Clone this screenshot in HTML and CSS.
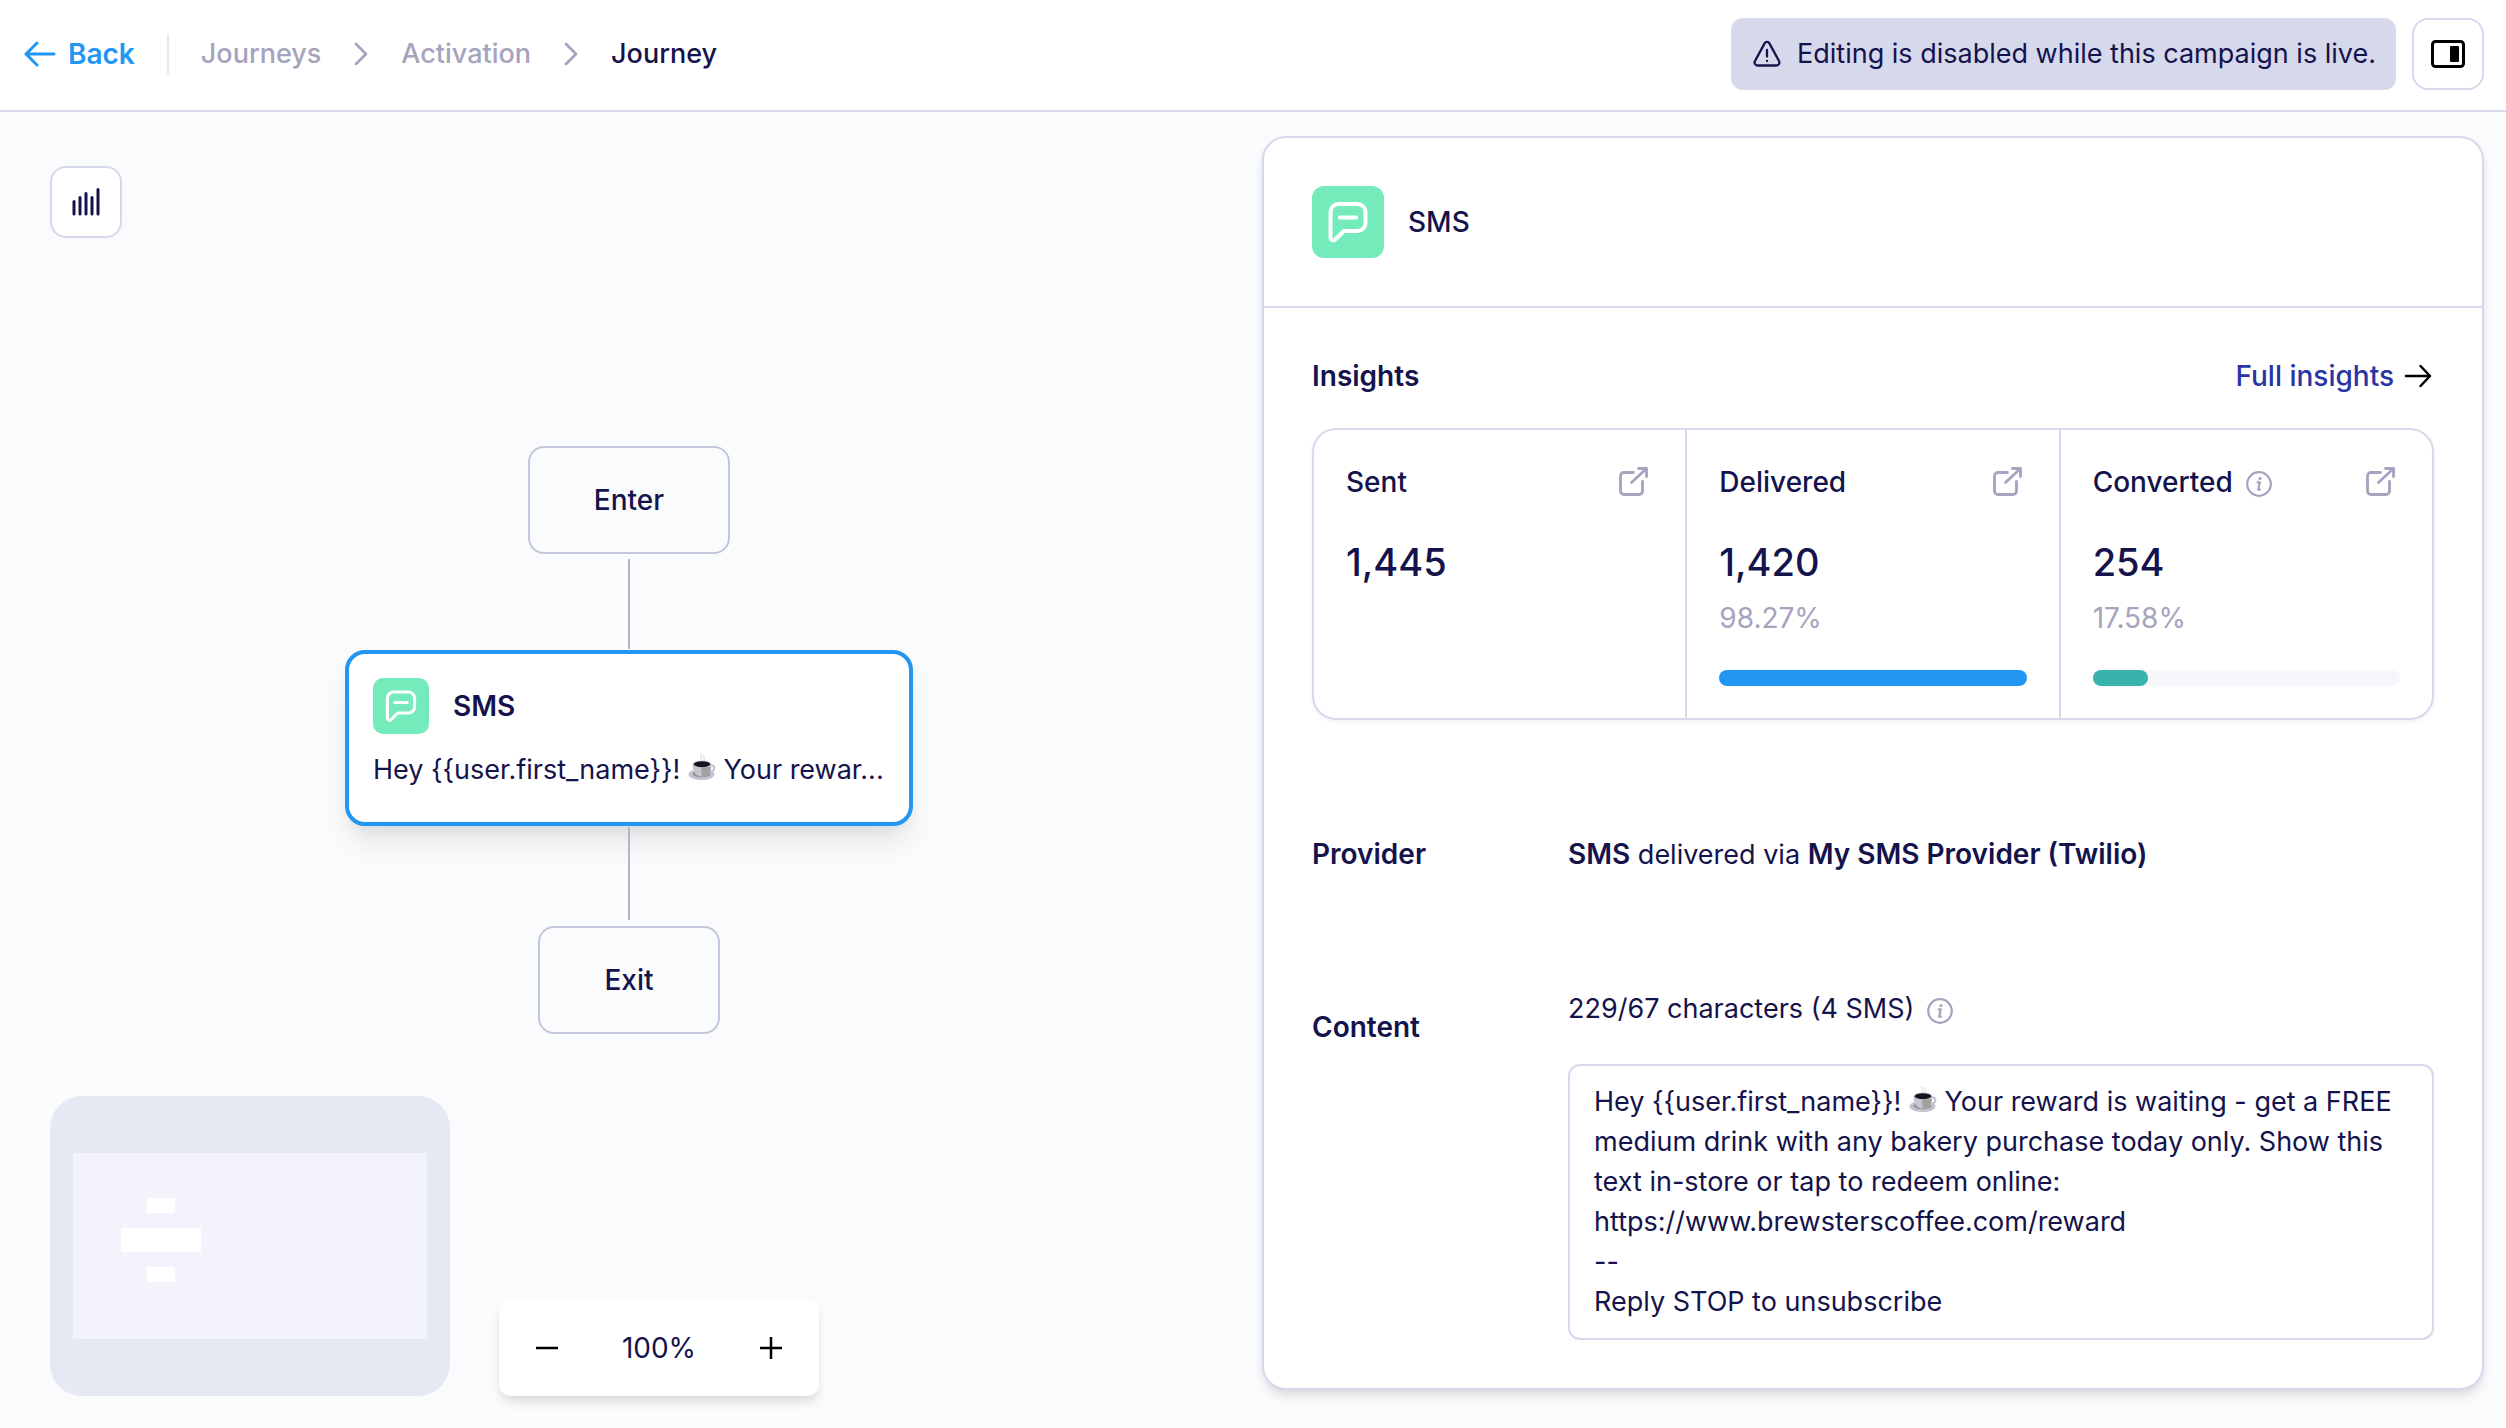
FILE: index.html
```html
<!DOCTYPE html>
<html lang="en">
<head>
    <meta charset="UTF-8">
    <meta name="viewport" content="width=device-width, initial-scale=1.0">
    <title>Journey</title>
    <link rel="stylesheet" href="styles.css">
</head>
<body>
    <!-- shared icons -->
    <svg class="sprite" aria-hidden="true">
        <symbol id="icon-sms" viewBox="0 0 72 72">
            <path d="M18.500 51V26a8 8 0 0 1 8-8h19a8 8 0 0 1 8 8v11a8 8 0 0 1-8 8H32l-8.500 8.300a2.900 2.900 0 0 1-5-2.300z" fill="none" stroke="#fff" stroke-width="4" stroke-linejoin="round"/>
            <path d="M28 31.500h16" fill="none" stroke="#fff" stroke-width="4" stroke-linecap="round"/>
        </symbol>
        <symbol id="icon-external" viewBox="0 0 40 40">
            <path d="M20.500 10.500H11a3.500 3.500 0 0 0-3.500 3.500v15a3.500 3.500 0 0 0 3.500 3.500h15a3.500 3.500 0 0 0 3.500-3.500V19.500M18.500 20.500 33.500 6.500M25.500 6.500h8v8" fill="none" stroke="#a5a3bd" stroke-width="2.800" stroke-linecap="round" stroke-linejoin="round"/>
        </symbol>
        <symbol id="icon-info" viewBox="0 0 28 28">
            <circle cx="14" cy="14" r="11.800" fill="none" stroke="#a5a3bd" stroke-width="2.200"/>
            <path d="M11.800 12.300h3l-1.600 7.400h2.600" fill="none" stroke="#a5a3bd" stroke-width="2.200" stroke-linejoin="round"/>
            <circle cx="15" cy="8.600" r="1.600" fill="#a5a3bd"/>
        </symbol>
        <symbol id="icon-chevron" viewBox="0 0 16 24">
            <path d="M3 2l10 10L3 22" fill="none" stroke="#a5a3bd" stroke-width="2.800" stroke-linecap="round" stroke-linejoin="round"/>
        </symbol>
        <symbol id="icon-coffee" viewBox="0 0 28 28">
            <path d="M13 1c-2 2 2 3 0 6M16 2c-1 2 1 3 0 5" fill="none" stroke="#dddde2" stroke-width="1.200"/>
            <ellipse cx="13.500" cy="21.500" rx="13" ry="5.500" fill="#c3c2d0"/>
            <ellipse cx="13.500" cy="20.800" rx="9" ry="3.500" fill="#94908f"/>
            <path d="M22 12.500c6-1.500 6 6.500-1 6.500" fill="none" stroke="#c0c0d2" stroke-width="2"/>
            <path d="M4.500 11c0 7 3 12.500 9.500 12.500S23.500 18 23.500 11z" fill="#c6c6d2"/>
            <path d="M13 14h10c-1 6-4 9.500-9 9.500z" fill="#a39f9d"/>
            <ellipse cx="14" cy="11" rx="9.500" ry="3.700" fill="#d7d7e2"/>
            <ellipse cx="14" cy="11.200" rx="8.200" ry="3" fill="#16141f"/>
        </symbol>
    </svg>

    <header class="topbar">
        <a class="back" href="#">
            <svg width="32" height="28" viewBox="0 0 32 28" fill="none" stroke="#2196f3" stroke-width="3" stroke-linecap="round" stroke-linejoin="round"><path d="M30 14H2M13 3 2 14l11 11"/></svg>
            Back
        </a>
        <nav class="breadcrumbs">
            <a href="#">Journeys</a>
            <svg class="chevron"><use href="#icon-chevron"/></svg>
            <a href="#">Activation</a>
            <svg class="chevron"><use href="#icon-chevron"/></svg>
            <span class="current">Journey</span>
        </nav>
        <div class="notice">
            <svg width="28" height="28" viewBox="0 0 28 28" fill="none" stroke="#14134b" stroke-width="2.300" stroke-linecap="round" stroke-linejoin="round"><path d="M11.600 3.400 2 21a3 3 0 0 0 2.600 4.500h18.800A3 3 0 0 0 26 21L16.400 3.400a2.700 2.700 0 0 0-4.800 0zM14 10v6.500M14 20.800v.200"/></svg>
            Editing is disabled while this campaign is live.
        </div>
        <button class="icon-btn" aria-label="Toggle panel">
            <svg width="36" height="28" viewBox="0 0 36 28"><rect x="2.500" y="1.500" width="31" height="25" rx="3" fill="none" stroke="#000" stroke-width="3"/><rect x="20" y="6" width="9" height="16" rx="1" fill="#000"/></svg>
        </button>
    </header>

    <main class="workspace">
        <section class="canvas">
            <button class="icon-btn" aria-label="Statistics">
                <svg width="30" height="30" viewBox="0 0 30 30" stroke="#14134b" stroke-width="3" stroke-linecap="round"><path d="M3 14.500V27M9 10.500V27M15 6.500V27M21 10.500V27M27 2.500V27"/></svg>
            </button>

            <div class="flow">
                <div class="node">Enter</div>
                <div class="connector first"></div>
                <div class="node-card">
                    <div class="node-title">
                        <svg class="sms-icon small"><use href="#icon-sms"/></svg>
                        SMS
                    </div>
                    <p class="node-text">Hey {{user.first_name}}! <svg class="emoji" role="img" aria-label="☕"><use href="#icon-coffee"/></svg> Your rewar...</p>
                </div>
                <div class="connector second"></div>
                <div class="node">Exit</div>
            </div>

            <div class="canvas-footer">
                <div class="minimap">
                    <div class="minimap-view">
                        <div class="mini-node"></div>
                        <div class="mini-node wide"></div>
                        <div class="mini-node"></div>
                    </div>
                </div>
                <div class="zoom">
                    <button aria-label="Zoom out"><svg width="24" height="24" viewBox="0 0 24 24" stroke="#000" stroke-width="2.500"><path d="M1 12h22"/></svg></button>
                    <span>100%</span>
                    <button aria-label="Zoom in"><svg width="24" height="24" viewBox="0 0 24 24" stroke="#000" stroke-width="2.500"><path d="M1 12h22M12 1v22"/></svg></button>
                </div>
            </div>
        </section>

        <aside class="panel">
            <div class="panel-header">
                <svg class="sms-icon"><use href="#icon-sms"/></svg>
                <h1>SMS</h1>
            </div>
            <div class="panel-body">
                <div class="insights-header">
                    <h2>Insights</h2>
                    <a href="#">Full insights
                        <svg width="28" height="24" viewBox="0 0 28 24" fill="none" stroke="#000" stroke-width="2.500" stroke-linecap="round" stroke-linejoin="round"><path d="M2 12h24M16.500 2 26 12l-9.500 10"/></svg>
                    </a>
                </div>
                <div class="stats">
                    <div class="stat">
                        <div class="stat-label">Sent <a href="#" aria-label="Open sent"><svg><use href="#icon-external"/></svg></a></div>
                        <div class="stat-value">1,445</div>
                    </div>
                    <div class="stat">
                        <div class="stat-label">Delivered <a href="#" aria-label="Open delivered"><svg><use href="#icon-external"/></svg></a></div>
                        <div class="stat-value">1,420</div>
                        <div class="stat-percent">98.27%</div>
                        <div class="bar"><div class="bar-fill blue" style="width: 100%"></div></div>
                    </div>
                    <div class="stat">
                        <div class="stat-label">Converted <svg class="info"><use href="#icon-info"/></svg> <a href="#" aria-label="Open converted"><svg><use href="#icon-external"/></svg></a></div>
                        <div class="stat-value">254</div>
                        <div class="stat-percent">17.58%</div>
                        <div class="bar"><div class="bar-fill teal" style="width: 18%"></div></div>
                    </div>
                </div>

                <div class="row">
                    <h2>Provider</h2>
                    <p><b>SMS</b> delivered via <b>My SMS Provider (Twilio)</b></p>
                </div>

                <div class="row content-row">
                    <h2>Content</h2>
                    <div>
                        <div class="count">229/67 characters (4 SMS) <svg class="info"><use href="#icon-info"/></svg></div>
                        <div class="message">Hey {{user.first_name}}! <svg class="emoji" role="img" aria-label="☕"><use href="#icon-coffee"/></svg> Your reward is waiting - get a FREE medium drink with any bakery purchase today only. Show this text in-store or tap to redeem online:<br>https://www.brewsterscoffee.com/reward<br>--<br>Reply STOP to unsubscribe</div>
                    </div>
                </div>
            </div>
        </aside>
    </main>
</body>
</html>
```
FILE: styles.css
```css
* {
    box-sizing: border-box;
}

body {
    margin: 0;
    min-height: 100vh;
    display: flex;
    flex-direction: column;
    background: #fafbfd;
    color: #14134b;
    font-family: Inter, "Liberation Sans", sans-serif;
    font-size: 27px;
    line-height: 40px;
}

h1, h2, p {
    margin: 0;
}

h1, h2, b {
    font-size: 28px;
}

h1 {
    font-weight: 500;
}

h2, b {
    font-weight: 600;
}

a {
    color: inherit;
    text-decoration: none;
}

svg {
    flex-shrink: 0;
}

button {
    padding: 0;
    border: none;
    background: none;
    cursor: pointer;
    display: flex;
    align-items: center;
    justify-content: center;
}

.sprite {
    display: none;
}

/* top bar */
.topbar {
    display: flex;
    align-items: center;
    height: 112px;
    padding: 0 22px 2px 24px;
    background: white;
    border-bottom: 2px solid #d6d8ec;
}

.back {
    display: flex;
    align-items: center;
    gap: 12px;
    padding-right: 32px;
    border-right: 2px solid #e6e7f3;
    color: #2196f3;
    font-size: 28px;
    font-weight: 600;
}

.breadcrumbs {
    display: flex;
    align-items: center;
    gap: 32px;
    margin: 0 auto 0 32px;
    color: #a5a3bd;
    font-weight: 500;
}

.breadcrumbs .current {
    color: #14134b;
}

.chevron {
    width: 16px;
    height: 24px;
}

.notice {
    display: flex;
    align-items: center;
    gap: 16px;
    height: 72px;
    margin-right: 16px;
    padding: 0 20px 0 22px;
    background: #d6d8ec;
    border-radius: 12px;
}

.icon-btn {
    width: 72px;
    height: 72px;
    background: white;
    border: 2px solid #d6d8ec;
    border-radius: 16px;
}

/* canvas */
.workspace {
    flex: 1;
    display: grid;
    grid-template-columns: 1fr 1fr;
    gap: 40px;
    padding-right: 22px;
}

.canvas {
    display: flex;
    flex-direction: column;
    padding: 54px 0 32px 50px;
}

.flow {
    display: flex;
    flex-direction: column;
    align-items: center;
    padding: 208px 14px 0 0;
}

.node {
    padding: 32px 64px;
    border: 2px solid #c4c6de;
    border-radius: 16px;
    font-size: 28px;
    font-weight: 500;
}

.node-card {
    width: 568px;
    padding: 24px 24px 32px;
    background: white;
    border: 4px solid #2196f3;
    border-radius: 20px;
    box-shadow: 0 20px 30px -6px rgba(0, 0, 0, 0.1), 0 8px 12px -4px rgba(0, 0, 0, 0.05);
}

.node-title {
    display: flex;
    align-items: center;
    gap: 24px;
    margin-bottom: 16px;
    font-size: 28px;
    font-weight: 600;
}

.node-text {
    white-space: nowrap;
}

.connector {
    width: 2px;
    background: #b4b3c8;
}

.connector.first {
    height: 90px;
    margin: 5px 0 1px;
}

.connector.second {
    height: 93px;
    margin: 1px 0 6px;
}

.sms-icon {
    width: 72px;
    height: 72px;
    background: #75ebbb;
    border-radius: 12px;
}

.sms-icon.small {
    width: 56px;
    height: 56px;
    border-radius: 10px;
}

.emoji {
    width: 28px;
    height: 28px;
    vertical-align: -2px;
}

.canvas-footer {
    display: flex;
    align-items: flex-end;
    gap: 49px;
    margin-top: auto;
}

.minimap {
    width: 400px;
    height: 300px;
    padding: 57px 23px;
    background: #e6e8f4;
    border-radius: 32px;
}

.minimap-view {
    display: flex;
    flex-direction: column;
    align-items: center;
    gap: 15px;
    height: 186px;
    padding: 45px 178px 0 0;
    background: #f3f3fb;
}

.mini-node {
    width: 28px;
    height: 15px;
    background: white;
}

.mini-node.wide {
    width: 80px;
    height: 24px;
}

.zoom {
    display: flex;
    align-items: center;
    justify-content: space-between;
    width: 320px;
    height: 96px;
    padding: 0 36px;
    background: white;
    border-radius: 12px;
    font-size: 28px;
    box-shadow: 0 8px 12px -2px rgba(0, 0, 0, 0.1), 0 4px 8px -2px rgba(0, 0, 0, 0.06);
}

/* details panel */
.panel {
    align-self: start;
    margin: 24px 0 36px;
    background: white;
    border: 2px solid #d6d8ec;
    border-radius: 24px;
    box-shadow: 0 8px 12px -2px rgba(0, 0, 0, 0.1), 0 4px 8px -2px rgba(0, 0, 0, 0.06);
}

.panel-header {
    display: flex;
    align-items: center;
    gap: 24px;
    padding: 48px;
    border-bottom: 2px solid #d6d8ec;
}

.panel-body {
    padding: 48px;
}

.insights-header {
    display: flex;
    justify-content: space-between;
    margin-bottom: 32px;
}

.insights-header a {
    display: flex;
    align-items: center;
    gap: 10px;
    padding-right: 2px;
    color: #2a35a3;
    font-size: 28px;
    font-weight: 500;
}

.stats {
    display: flex;
    border: 2px solid #d6d8ec;
    border-radius: 24px;
    font-size: 28px;
    box-shadow: 0 2px 4px rgba(0, 0, 0, 0.05);
}

.stat {
    flex: 1;
    padding: 32px;
    border-right: 2px solid #d6d8ec;
}

.stat:last-child {
    border-right: none;
}

.stat-label {
    display: flex;
    align-items: center;
    margin-bottom: 32px;
    font-weight: 500;
}

.stat-label a {
    display: flex;
    margin-left: auto;
}

.stat-label a svg {
    width: 40px;
    height: 40px;
}

.info {
    width: 28px;
    height: 28px;
}

.stat-label .info {
    margin: 4px 0 0 12px;
}

.stat-value {
    margin-bottom: 8px;
    font-size: 38px;
    line-height: 56px;
    font-weight: 500;
}

.stat-percent {
    margin-bottom: 32px;
    color: #a5a3bd;
}

.bar {
    height: 16px;
    background: #f5f7fa;
    border-radius: 8px;
}

.bar-fill {
    height: 16px;
    border-radius: 8px;
}

.blue {
    background: #2196f3;
}

.teal {
    background: #38b2ac;
}

.row {
    display: grid;
    grid-template-columns: 256px 1fr;
    margin-top: 114px;
}

.content-row h2 {
    padding-top: 18px;
}

.count {
    display: flex;
    align-items: center;
    gap: 12px;
    margin-bottom: 35px;
}

.count .info {
    margin-top: 4px;
}

.message {
    padding: 16px 24px;
    border: 2px solid #d6d8ec;
    border-radius: 12px;
}
```
